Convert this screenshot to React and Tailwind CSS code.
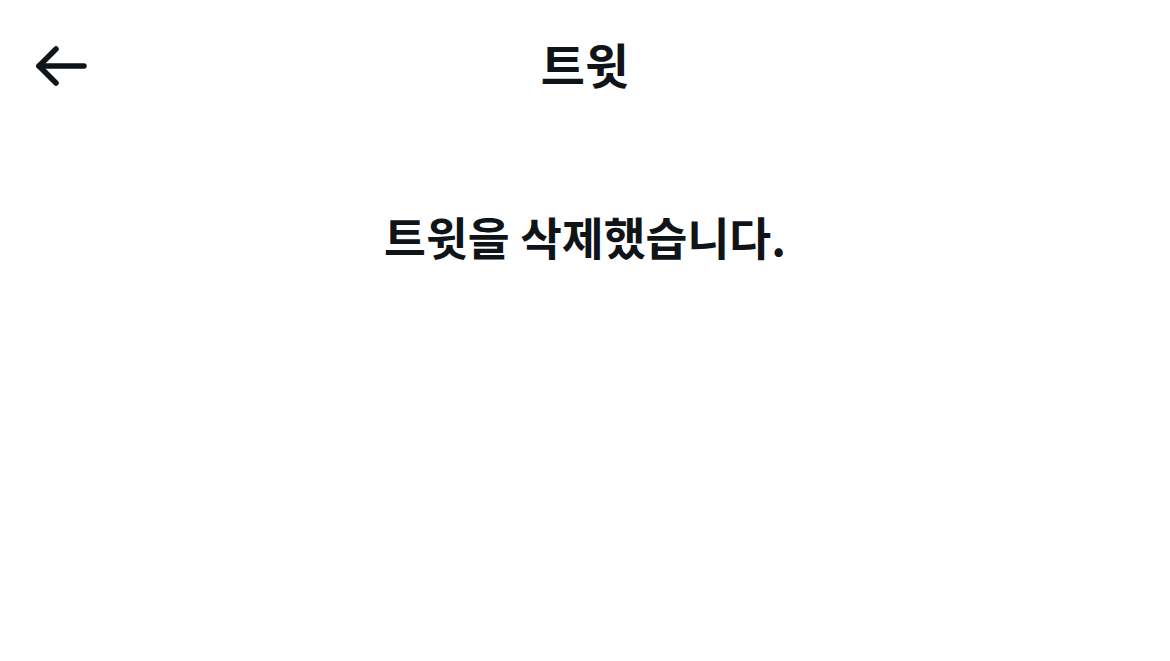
import React from 'react';

const font = { fontFamily: '"Noto Sans CJK KR", "Noto Sans", sans-serif' };

export default function App() {
  return (
    <div className="w-[1170px] h-[661px] bg-white text-[#0f1419]" style={font}>
      <header className="relative flex items-center justify-center h-[132px] pb-[6px]">
        <button className="absolute left-[30px] top-[40px] w-[62px] h-[52px] flex items-center justify-center" aria-label="뒤로">
          <svg width="62" height="52" viewBox="0 0 62 52" fill="none" stroke="currentColor" strokeWidth="5.5" strokeLinecap="round" strokeLinejoin="round">
            <path d="M9 26H54" />
            <path d="M26 9L9 26L26 43" />
          </svg>
        </button>
        <h1 className="text-[48px] font-bold leading-none">트윗</h1>
      </header>
      <main className="flex justify-center pt-[82px]">
        <p className="text-[45.5px] font-bold leading-none">트윗을 삭제했습니다.</p>
      </main>
    </div>
  );
}
